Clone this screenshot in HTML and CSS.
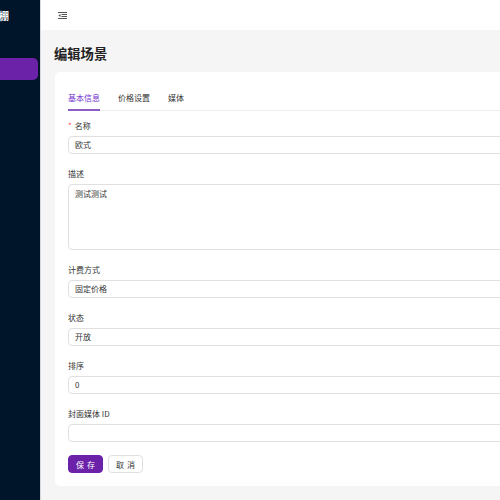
FILE: index.html
```html
<!DOCTYPE html>
<html lang="zh-CN">
<head>
    <meta charset="UTF-8">
    <title>编辑场景</title>
    <link rel="stylesheet" href="styles.css">
</head>
<body>
    <aside class="sider">
        <div class="sider-logo"><span>智慧大棚</span></div>
        <div class="sider-menu">
            <div class="menu-item active"></div>
        </div>
    </aside>
    <div class="main">
        <header class="header">
            <svg class="fold-icon" width="9" height="7" viewBox="0 0 9 7">
                <path d="M0 0.5H9M3.5 2.5H9M3.5 4.5H9M0 6.5H9" stroke="#555" stroke-width="1" fill="none"/>
                <path d="M0.3 3.5L2.5 2V5Z" fill="#555"/>
            </svg>
        </header>
        <div class="content">
            <h1 class="page-title">编辑场景</h1>
            <div class="card">
                <div class="tabs">
                    <div class="tab active">基本信息</div>
                    <div class="tab">价格设置</div>
                    <div class="tab">媒体</div>
                </div>
                <form class="form">
                    <div class="form-item">
                        <label class="form-label"><span class="required">*</span>名称</label>
                        <div class="input">欧式</div>
                    </div>
                    <div class="form-item">
                        <label class="form-label">描述</label>
                        <div class="input textarea">测试测试</div>
                    </div>
                    <div class="form-item">
                        <label class="form-label">计费方式</label>
                        <div class="input">固定价格</div>
                    </div>
                    <div class="form-item">
                        <label class="form-label">状态</label>
                        <div class="input">开放</div>
                    </div>
                    <div class="form-item">
                        <label class="form-label">排序</label>
                        <div class="input">0</div>
                    </div>
                    <div class="form-item">
                        <label class="form-label">封面媒体 ID</label>
                        <div class="input"></div>
                    </div>
                    <div class="actions">
                        <button type="button" class="btn btn-primary">保 存</button>
                        <button type="button" class="btn">取 消</button>
                    </div>
                </form>
            </div>
        </div>
    </div>
</body>
</html>
```

FILE: styles.css
```css
body {
    margin: 0;
    padding: 0;
    display: flex;
    height: 100vh;
    overflow: hidden;
    background-color: #f5f5f5;
    font-family: "Noto Sans CJK SC", "Noto Sans", sans-serif;
    color: #262626;
}
.sider {
    flex: none;
    width: 40px;
    background-color: #001529;
    overflow: hidden;
}
.sider-logo {
    height: 30px;
    display: flex;
    align-items: center;
    justify-content: flex-end;
    padding-right: 31px;
    white-space: nowrap;
    color: #fff;
    font-size: 10px;
    font-weight: 700;
}
.sider-menu {
    padding-top: 28px;
}
.menu-item {
    height: 22px;
    margin-right: 2px;
    border-radius: 0 5px 5px 0;
}
.menu-item.active {
    background-color: #6b21a8;
}
.main {
    flex: none;
    width: 640px;
    border-left: 1px solid #d5dae0;
    display: flex;
    flex-direction: column;
}
.header {
    height: 30px;
    background-color: #fff;
    display: flex;
    align-items: center;
    padding-left: 17px;
}
.fold-icon {
    display: block;
}
.content {
    padding: 15px 0 0 13px;
}
.page-title {
    margin: 0 0 9px;
    font-size: 13.3px;
    line-height: 18px;
    font-weight: 700;
    color: #222;
}
.card {
    margin-left: 1px;
    background-color: #fff;
    border-radius: 5px;
    padding: 13px;
}
.tabs {
    display: flex;
    gap: 18px;
    border-bottom: 1px solid #eeeeee;
    margin-bottom: 9px;
}
.tab {
    padding: 7px 0 5px;
    font-size: 8px;
    line-height: 12px;
    color: #333;
    border-bottom: 2px solid transparent;
    margin-bottom: -1px;
}
.tab.active {
    color: #722ed1;
    border-bottom-color: #8e5cc4;
}
.form-item {
    margin-bottom: 14px;
}
.form-label {
    display: block;
    font-size: 8px;
    line-height: 12px;
    padding-bottom: 4px;
    color: #333;
}
.required {
    color: #ff4d4f;
    margin-right: 3px;
}
.input {
    box-sizing: border-box;
    height: 18px;
    border: 1px solid #e0e0e0;
    border-radius: 4px;
    padding: 0 6px;
    font-size: 8px;
    line-height: 16px;
    color: #333;
}
.input.textarea {
    height: 66px;
    padding-top: 3px;
    line-height: 12px;
}
.actions {
    display: flex;
    gap: 5px;
    margin-top: -1px;
}
.btn {
    box-sizing: border-box;
    height: 18px;
    width: 35px;
    padding: 0;
    border: 1px solid #e0e0e0;
    border-radius: 4px;
    background-color: #fff;
    font-family: inherit;
    font-size: 8px;
    word-spacing: 1px;
    color: #333;
    cursor: pointer;
}
.btn-primary {
    background-color: #6b21a8;
    border-color: #6b21a8;
    color: #fff;
}
```
